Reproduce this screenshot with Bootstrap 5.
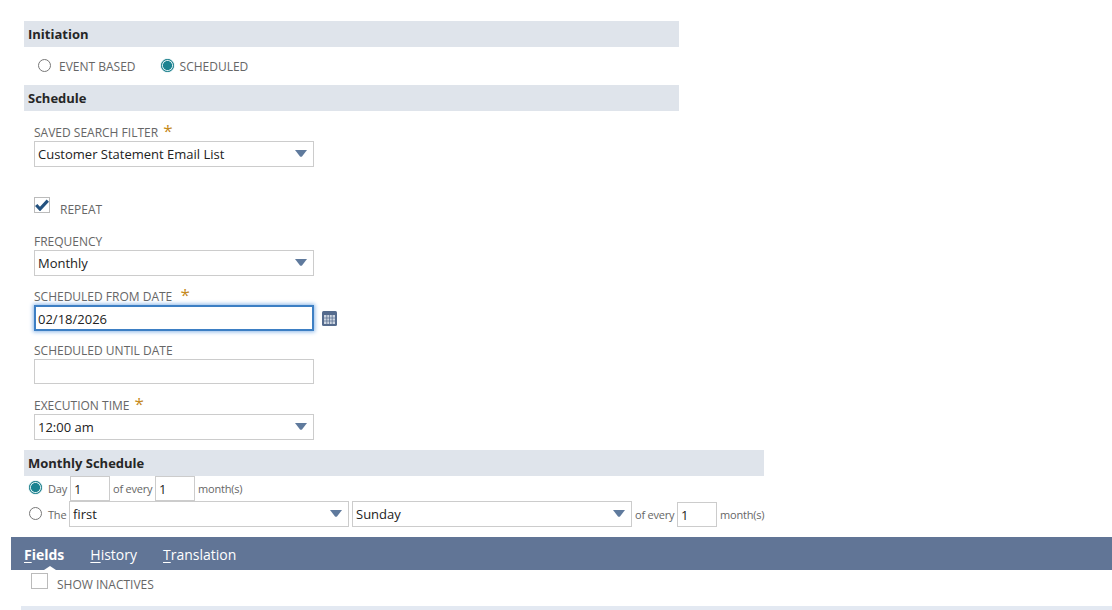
<!DOCTYPE html>
<html lang="en">
<head>
<meta charset="utf-8">
<title>Schedule</title>
<link rel="stylesheet" href="https://cdn.jsdelivr.net/npm/bootstrap@5.3.0/dist/css/bootstrap.min.css">
<style>
html,body{height:610px;overflow:hidden}
body{font-family:"Open Sans","Liberation Sans",sans-serif;font-size:13px;color:#222;background:#fff}
.pagewrap{padding:21px 0 0 0}
.formarea{padding-left:24px}
.secbar{height:26px;width:655px;background:#dfe4eb;font-weight:700;font-size:13px;line-height:26px;padding-left:4px;color:#262626}
.secbar.wide{width:740px;margin-top:10px}
.fldlabel{font-size:12px;line-height:18px;color:#666;text-transform:uppercase;display:block;height:16px;margin:0 0 1px;white-space:nowrap}
.reqstar{color:#c58a1c;font-size:17px;line-height:12px;font-weight:400;margin-left:2px}
.ctl{width:280px;height:26px;border:1px solid #ccc;border-radius:0;padding:0 3px;font-size:13px;line-height:24px;color:#222;box-shadow:none;background-color:#fff}
.ctl:focus{border-color:#ccc;box-shadow:none}
select.ctl{background-image:url("data:image/svg+xml,%3Csvg xmlns='http://www.w3.org/2000/svg' width='12' height='7'%3E%3Cpath d='M0 0h12L7 6.4Q6 7 5 6.4z' fill='%235f7a9d'/%3E%3C/svg%3E");background-repeat:no-repeat;background-position:right 6px top 8px;background-size:12px 7px;padding:0 22px 0 3px}
.ctl.focused,.ctl.focused:focus{border:2px solid #3d7fc4;box-shadow:0 0 4px 1px #8db8e8;padding:2px 0 0 2px}
.ctl.short{height:25px}
.fldcol{padding-left:10px}
.radio-ns{width:13px;height:13px;margin:0 0 2px;border:1px solid #777;background:#fff;flex:none;border-radius:50%;appearance:none;box-shadow:none}
.radio-ns:checked{border-color:#1c7f8c;background:radial-gradient(circle,#1c8391 0,#1c8391 4.2px,#d8eef0 4.8px);background-color:#fff;box-shadow:0 0 1px #1c8391}
.radio-ns:focus{box-shadow:none}
.chk-ns{width:16px;height:16px;border:1px solid #bbb;flex:none;display:flex;align-items:center;justify-content:center;background:#fff}
.initrow{height:38px;padding-left:14px;font-size:12px;color:#666}
.initrow span{padding-top:2px}
.lbl-event{margin:0 25px 0 8px}
.lbl-sched{margin-left:6px}
.fld-saved{margin-top:13px}
.repeatrow{margin-top:30px;margin-bottom:20px;height:16px;color:#666;font-size:12px}
.repeatrow .txt{margin:5px 0 0 10px;line-height:16px}
.fld-from{margin-top:12px}
.fld-until{margin-top:11px}
.fld-exec{margin-top:13px}
.mrow{font-size:11px;color:#666;letter-spacing:-.2px;height:26px;padding-left:29px}
.mrow span{padding-top:2px}
.mrow1{height:25px}
.lbl-day{width:22px;margin-left:6px}
.lbl-the{width:21px;margin-left:6px}
.lbl-of{width:42px;margin-left:3px}
.lbl-mo{margin-left:3px}
.numbox{width:40px;height:25px;padding:1px 3px 0;font-size:13px;letter-spacing:0}
.sel-day{margin-left:3px}
.tabbar{margin:10px 0 0 11px;height:33px;background:#617596;padding-left:13px;gap:26px;font-size:14px;line-height:35px;position:relative}
.tabitem{color:#fff;text-decoration:none}
.tabitem u{text-underline-offset:2px}
.tabitem.active{font-weight:700}
.tabnotch{position:absolute;left:33px;bottom:0;width:0;height:0;border:6px solid transparent;border-top:0;border-bottom:4px solid #fff}
.inactrow{padding:3px 0 0 31px;font-size:12px;color:#666;height:36px;gap:9px}
.inactrow .chk-ns{width:17px}
.inactrow .txt{margin-top:4px;line-height:16px}
.bottomstrip{margin-left:21px;height:6px;background:#e3e9f2}
</style>
</head>
<body>
<div class="pagewrap">
  <div class="formarea">
    <div class="secbar">Initiation</div>
    <div class="initrow d-flex align-items-center">
      <input class="radio-ns" type="radio" name="init">
      <span class="lbl-event">EVENT BASED</span>
      <input class="radio-ns" type="radio" name="init" checked>
      <span class="lbl-sched">SCHEDULED</span>
    </div>
    <div class="secbar">Schedule</div>

    <div class="fldcol">
      <div class="fld-saved">
        <label class="fldlabel">Saved Search Filter <span class="reqstar">*</span></label>
        <select class="ctl form-select"><option>Customer Statement Email List</option></select>
      </div>

      <div class="repeatrow d-flex align-items-start">
        <div class="chk-ns">
          <svg width="14" height="12" viewBox="0 0 14 12"><path d="M1.2 6 5 10 12.8 1.6" fill="none" stroke="#24527f" stroke-width="3.2"/></svg>
        </div>
        <span class="txt">REPEAT</span>
      </div>

      <div>
        <label class="fldlabel">Frequency</label>
        <select class="ctl form-select"><option>Monthly</option></select>
      </div>

      <div class="fld-from">
        <label class="fldlabel">Scheduled From Date &nbsp;<span class="reqstar">*</span></label>
        <div class="d-flex align-items-center">
          <input class="ctl form-control focused" type="text" value="02/18/2026">
          <svg class="ms-2" width="15" height="15" viewBox="0 0 15 15">
            <rect width="15" height="15" rx="1.5" fill="#556b8d"/>
            <rect x="2" y="4" width="11" height="9" fill="#cdd5e0"/>
            <path d="M2 7h11M2 10h11M4.8 4v9M7.5 4v9M10.2 4v9" stroke="#556b8d" stroke-width=".7"/>
          </svg>
        </div>
      </div>

      <div class="fld-until">
        <label class="fldlabel">Scheduled Until Date</label>
        <input class="ctl short form-control" type="text">
      </div>

      <div class="fld-exec">
        <label class="fldlabel">Execution Time <span class="reqstar">*</span></label>
        <select class="ctl form-select"><option>12:00 am</option></select>
      </div>
    </div>

    <div class="secbar wide">Monthly Schedule</div>
  </div>

  <div class="mrow mrow1 d-flex align-items-center">
    <input class="radio-ns" type="radio" name="mon" checked>
    <span class="lbl-day">Day</span>
    <input class="ctl form-control numbox" type="text" value="1">
    <span class="lbl-of">of every</span>
    <input class="ctl form-control numbox" type="text" value="1">
    <span class="lbl-mo">month(s)</span>
  </div>
  <div class="mrow d-flex align-items-center">
    <input class="radio-ns" type="radio" name="mon">
    <span class="lbl-the">The</span>
    <select class="ctl form-select"><option>first</option></select>
    <select class="ctl form-select sel-day"><option>Sunday</option></select>
    <span class="lbl-of">of every</span>
    <input class="ctl form-control numbox" type="text" value="1">
    <span class="lbl-mo">month(s)</span>
  </div>

  <div class="tabbar d-flex">
    <a class="tabitem active" href="#"><u>F</u>ields</a>
    <a class="tabitem" href="#"><u>H</u>istory</a>
    <a class="tabitem" href="#"><u>T</u>ranslation</a>
    <span class="tabnotch"></span>
  </div>
  <div class="inactrow d-flex align-items-start">
    <div class="chk-ns"></div>
    <span class="txt">SHOW INACTIVES</span>
  </div>
  <div class="bottomstrip"></div>
</div>
<script src="https://cdn.jsdelivr.net/npm/bootstrap@5.3.0/dist/js/bootstrap.bundle.min.js"></script>
</body>
</html>
